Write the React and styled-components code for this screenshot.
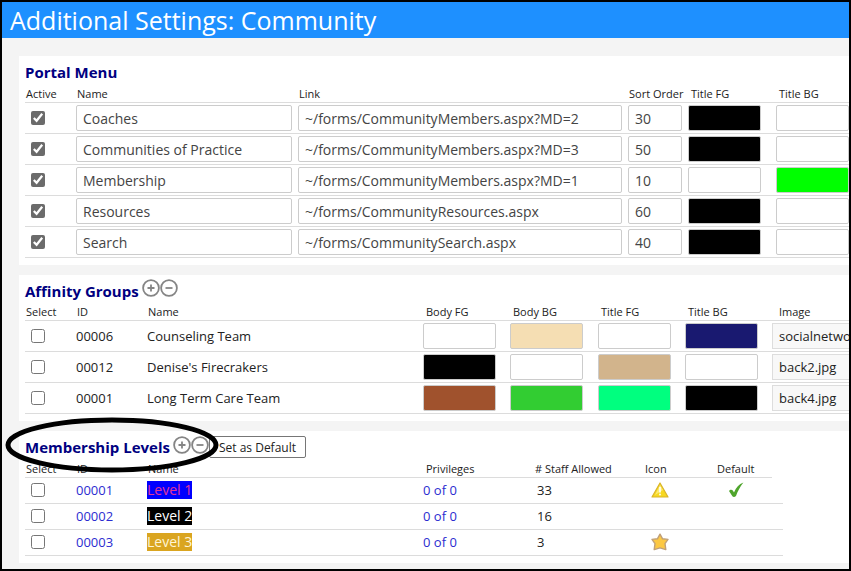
import React from 'react';
import styled, { createGlobalStyle } from 'styled-components';

const navy = '#000080';
const blue = '#1e90ff';
const grey = '#f4f4f4';
const line = '#dcdcdc';
const link = '#2c2cd0';
const text = '#222222';

const menuItems = [
	{ name: 'Coaches', url: '~/forms/CommunityMembers.aspx?MD=2', order: 30, fg: '#000000', bg: '#ffffff' },
	{ name: 'Communities of Practice', url: '~/forms/CommunityMembers.aspx?MD=3', order: 50, fg: '#000000', bg: '#ffffff' },
	{ name: 'Membership', url: '~/forms/CommunityMembers.aspx?MD=1', order: 10, fg: '#ffffff', bg: '#00ff00' },
	{ name: 'Resources', url: '~/forms/CommunityResources.aspx', order: 60, fg: '#000000', bg: '#ffffff' },
	{ name: 'Search', url: '~/forms/CommunitySearch.aspx', order: 40, fg: '#000000', bg: '#ffffff' }
];

const groups = [
	{ id: '00006', name: 'Counseling Team', colors: ['#ffffff', '#f5deb3', '#ffffff', '#191970'], image: 'socialnetwork.jpg' },
	{ id: '00012', name: "Denise's Firecrakers", colors: ['#000000', '#ffffff', '#d2b48c', '#ffffff'], image: 'back2.jpg' },
	{ id: '00001', name: 'Long Term Care Team', colors: ['#a0522d', '#32cd32', '#00ff7f', '#000000'], image: 'back4.jpg' }
];

const groupColors = ['Body FG', 'Body BG', 'Title FG', 'Title BG'];

const levels = [
	{ id: '00001', name: 'Level 1', fg: '#e0359a', bg: '#0000ff', staff: 33, icon: 'warning', isDefault: true },
	{ id: '00002', name: 'Level 2', fg: '#ffffff', bg: '#000000', staff: 16 },
	{ id: '00003', name: 'Level 3', fg: '#fff5d6', bg: '#daa520', staff: 3, icon: 'star' }
];

const Warning = () => (
	<svg width="18" height="16" viewBox="0 0 18 16" role="img" aria-label="Warning">
		<path d="M9 1 L17 15 H1 Z" fill="#f7d821" stroke="#d9b32a" strokeWidth="1.2" strokeLinejoin="round" />
		<path d="M9 3 L12 8 L4 13 Z" fill="#fcea72" />
		<path d="M9 5.5 V10" stroke="#ffffff" strokeWidth="1.6" strokeLinecap="round" />
		<circle cx="9" cy="12.5" r="0.9" fill="#ffffff" />
	</svg>
);

const Star = () => (
	<svg width="18" height="18" viewBox="0 0 18 18" role="img" aria-label="Star">
		<path
			d="M9 1.2 L11.6 5.8 L17 6.4 L14 10.6 L14.8 16.6 L9 14.8 L3.2 16.6 L4 10.6 L1 6.4 L6.4 5.8 Z"
			fill="#fcc843"
			stroke="#c0a078"
			strokeWidth="1.4"
			strokeLinejoin="round"
		/>
	</svg>
);

const Check = () => (
	<svg width="16" height="16" viewBox="0 0 16 16" role="img" aria-label="Default level">
		<path d="M1 9 C2 7.4 3.8 7.4 4.8 8.4 L6 10.4 C8 5.6 11 2.4 15.4 0.6 C12 5 9.6 9.5 8 14 C6.6 15.4 5.2 15.2 4.4 14.2 Z" fill="#4fa52c" />
	</svg>
);

const CircleIcon = ({ plus }) => (
	<svg width="18" height="18" viewBox="0 0 18 18" fill="none" stroke="currentColor" strokeWidth="1.8">
		<circle cx="9" cy="9" r="7.9" />
		<path d={plus ? 'M5.5 9 H12.5 M9 5.5 V12.5' : 'M5.5 9 H12.5'} />
	</svg>
);

/**
 * Page title followed by the three settings panels
 *
 * @returns {object}
 */
const App = () => {
	return (
		<PageStyled>
			<GlobalStyle />
			<PageHeader>
				<h1>Additional Settings: Community</h1>
			</PageHeader>
			<main>
				<Panel>
					<PanelTitle>
						<h2>Portal Menu</h2>
					</PanelTitle>
					<Table>
						<colgroup>
							<Col $width={51} />
							<Col $width={222} />
							<col />
							<Col $width={60} />
							<Col $width={88} />
							<Col $width={73} />
						</colgroup>
						<thead>
							<tr>
								<Th>Active</Th>
								<Th>Name</Th>
								<Th>Link</Th>
								<Th>Sort Order</Th>
								<Th $indent={3}>Title FG</Th>
								<Th $indent={3}>Title BG</Th>
							</tr>
						</thead>
						<tbody>
							{menuItems.map(item => (
								<Row key={item.name}>
									<td>
										<Checkbox defaultChecked aria-label={`${item.name} active`} />
									</td>
									<td>
										<TextBox defaultValue={item.name} aria-label="Name" />
									</td>
									<td>
										<TextBox defaultValue={item.url} aria-label="Link" />
									</td>
									<td>
										<TextBox defaultValue={item.order} aria-label="Sort Order" />
									</td>
									<td>
										<Swatch $color={item.fg} aria-label="Title FG" />
									</td>
									<td>
										<Swatch $color={item.bg} aria-label="Title BG" />
									</td>
								</Row>
							))}
						</tbody>
					</Table>
				</Panel>

				<Panel>
					<PanelTitle>
						<h2>Affinity Groups</h2>
						<AddRemove label="group" />
					</PanelTitle>
					<Table>
						<colgroup>
							<Col $width={51} />
							<Col $width={71} />
							<Col $width={276} />
							<Col $width={87} />
							<Col $width={88} />
							<Col $width={87} />
							<Col $width={87} />
							<col />
						</colgroup>
						<thead>
							<tr>
								<Th>Select</Th>
								<Th>ID</Th>
								<Th>Name</Th>
								{groupColors.map(label => (
									<Th key={label} $indent={3}>
										{label}
									</Th>
								))}
								<Th $indent={7}>Image</Th>
							</tr>
						</thead>
						<tbody>
							{groups.map(group => (
								<Row key={group.id}>
									<td>
										<Checkbox aria-label={`Select ${group.name}`} />
									</td>
									<td>{group.id}</td>
									<td>{group.name}</td>
									{group.colors.map((color, i) => (
										<td key={groupColors[i]}>
											<Swatch $color={color} aria-label={groupColors[i]} />
										</td>
									))}
									<ImageCell>
										<ImageSelect aria-label="Image">
											<option>{group.image}</option>
										</ImageSelect>
									</ImageCell>
								</Row>
							))}
						</tbody>
					</Table>
				</Panel>

				<Panel>
					<PanelTitle>
						<h2>Membership Levels</h2>
						<AddRemove label="level" />
						<DefaultButton type="button">Set as Default</DefaultButton>
						<Highlight viewBox="0 0 214 56" aria-hidden="true">
							<ellipse cx="107" cy="28" rx="104" ry="25" />
						</Highlight>
					</PanelTitle>
					<LevelTable>
						<colgroup>
							<Col $width={51} />
							<Col $width={71} />
							<Col $width={276} />
							<Col $width={111} />
							<Col $width={99} />
							<Col $width={72} />
							<Col $width={67} />
							<Col $width={11} />
						</colgroup>
						<thead>
							<tr>
								<Th>Select</Th>
								<Th>ID</Th>
								<Th>Name</Th>
								<Th $indent={3}>Privileges</Th>
								<Th># Staff Allowed</Th>
								<Th $indent={12}>Icon</Th>
								<Th $indent={12}>Default</Th>
							</tr>
						</thead>
						<tbody>
							{levels.map(level => (
								<LevelRow key={level.id}>
									<td>
										<Checkbox aria-label={`Select ${level.name}`} />
									</td>
									<td>
										<a href="#level">{level.id}</a>
									</td>
									<td>
										<LevelName href="#level" $fg={level.fg} $bg={level.bg}>
											{level.name}
										</LevelName>
									</td>
									<td>
										<a href="#privileges">0 of 0</a>
									</td>
									<StaffCell>{level.staff}</StaffCell>
									<IconCell $indent={18}>
										{level.icon === 'warning' && <Warning />}
										{level.icon === 'star' && <Star />}
									</IconCell>
									<IconCell $indent={23}>{level.isDefault && <Check />}</IconCell>
									<td />
								</LevelRow>
							))}
						</tbody>
					</LevelTable>
				</Panel>
			</main>
		</PageStyled>
	);
};

const AddRemove = ({ label }) => (
	<IconButtons>
		<button type="button" aria-label={`Add ${label}`}>
			<CircleIcon plus />
		</button>
		<button type="button" aria-label={`Remove ${label}`}>
			<CircleIcon />
		</button>
	</IconButtons>
);

const GlobalStyle = createGlobalStyle`
	* {
		box-sizing: border-box;
	}

	body {
		margin: 0;
		font-family: 'Open Sans', 'Noto Sans', sans-serif;
		font-size: 13px;
		color: ${text};
	}

	input, select, button {
		font-family: inherit;
	}
`;

const PageStyled = styled.div`
	min-height: 100vh;
	background: ${grey};
	border: 2px solid #000000;
	overflow: hidden;

	main {
		display: flex;
		flex-direction: column;
		gap: 10px;
		padding: 18px 0 6px 17px;
	}
`;

const PageHeader = styled.header`
	background: ${blue};
	padding-left: 8px;

	h1 {
		margin: 0;
		color: #ffffff;
		font-size: 25px;
		font-weight: 400;
		line-height: 36px;
	}
`;

const Panel = styled.section`
	background: #ffffff;
	padding: 3px 0 7px 6px;
`;

const PanelTitle = styled.div`
	position: relative;
	display: flex;
	align-items: center;
	height: 26px;

	h2 {
		margin: 0;
		color: ${navy};
		font-size: 15px;
		font-weight: 700;
		line-height: 26px;
	}
`;

const IconButtons = styled.div`
	display: flex;
	margin-left: 3px;
	padding-bottom: 5px;

	button {
		display: flex;
		padding: 0;
		border: 0;
		background: none;
		color: #858585;
	}
`;

const DefaultButton = styled.button`
	height: 22px;
	padding: 0 9px;
	border: 1px solid #767676;
	border-radius: 2px;
	background: #ffffff;
	color: ${text};
	font-size: 12px;
`;

/* hand-drawn ring lying over the panel heading */
const Highlight = styled.svg`
	position: absolute;
	top: -17px;
	left: -20px;
	width: 214px;
	height: 56px;
	fill: none;
	stroke: #000000;
	stroke-width: 5px;
	pointer-events: none;
`;

const Table = styled.table`
	width: 100%;
	table-layout: fixed;
	border-collapse: collapse;

	a {
		color: ${link};
		text-decoration: none;
	}
`;

const LevelTable = styled(Table)`
	width: 758px;
`;

const Col = styled.col`
	width: ${props => props.$width}px;
`;

const Th = styled.th`
	height: 17px;
	padding: 0 0 0 ${props => props.$indent || 1}px;
	border-bottom: 1px solid ${line};
	font-size: 11px;
	font-weight: 400;
	line-height: 15px;
	text-align: left;
	white-space: nowrap;
`;

const Row = styled.tr`
	height: 31px;

	td {
		padding: 0;
		border-bottom: 1px solid ${line};
	}
`;

const LevelRow = styled(Row)`
	height: 26px;
`;

const StaffCell = styled.td`
	&& {
		padding-left: 3px;
	}
`;

const IconCell = styled.td`
	&& {
		padding-left: ${props => props.$indent}px;
	}

	svg {
		display: block;
	}
`;

const ImageCell = styled.td`
	overflow: hidden;
`;

const Checkbox = styled.input.attrs({ type: 'checkbox' })`
	display: block;
	width: 14px;
	height: 14px;
	margin: 0 0 0 6px;
	accent-color: #6b6b6b;
`;

const TextBox = styled.input.attrs({ type: 'text' })`
	display: block;
	width: calc(100% - 6px);
	height: 26px;
	padding: 2px 6px 0;
	border: 1px solid #cccccc;
	border-radius: 2px;
	color: #444444;
	font-size: 14px;
`;

const Swatch = styled.input.attrs({ type: 'text' })`
	display: block;
	width: 73px;
	height: 26px;
	border: 1px solid #cccccc;
	border-radius: 2px;
	background: ${props => props.$color};
`;

const ImageSelect = styled.select`
	display: block;
	width: 160px;
	height: 26px;
	padding: 0 6px;
	appearance: none;
	border: 1px solid #dddddd;
	background: #f8f8f8;
	color: ${text};
	font-size: 13px;
`;

const LevelName = styled.a`
	&& {
		display: inline-block;
		background: ${props => props.$bg};
		color: ${props => props.$fg};
		font-size: 14px;
		line-height: 18px;
	}
`;

export default App;
